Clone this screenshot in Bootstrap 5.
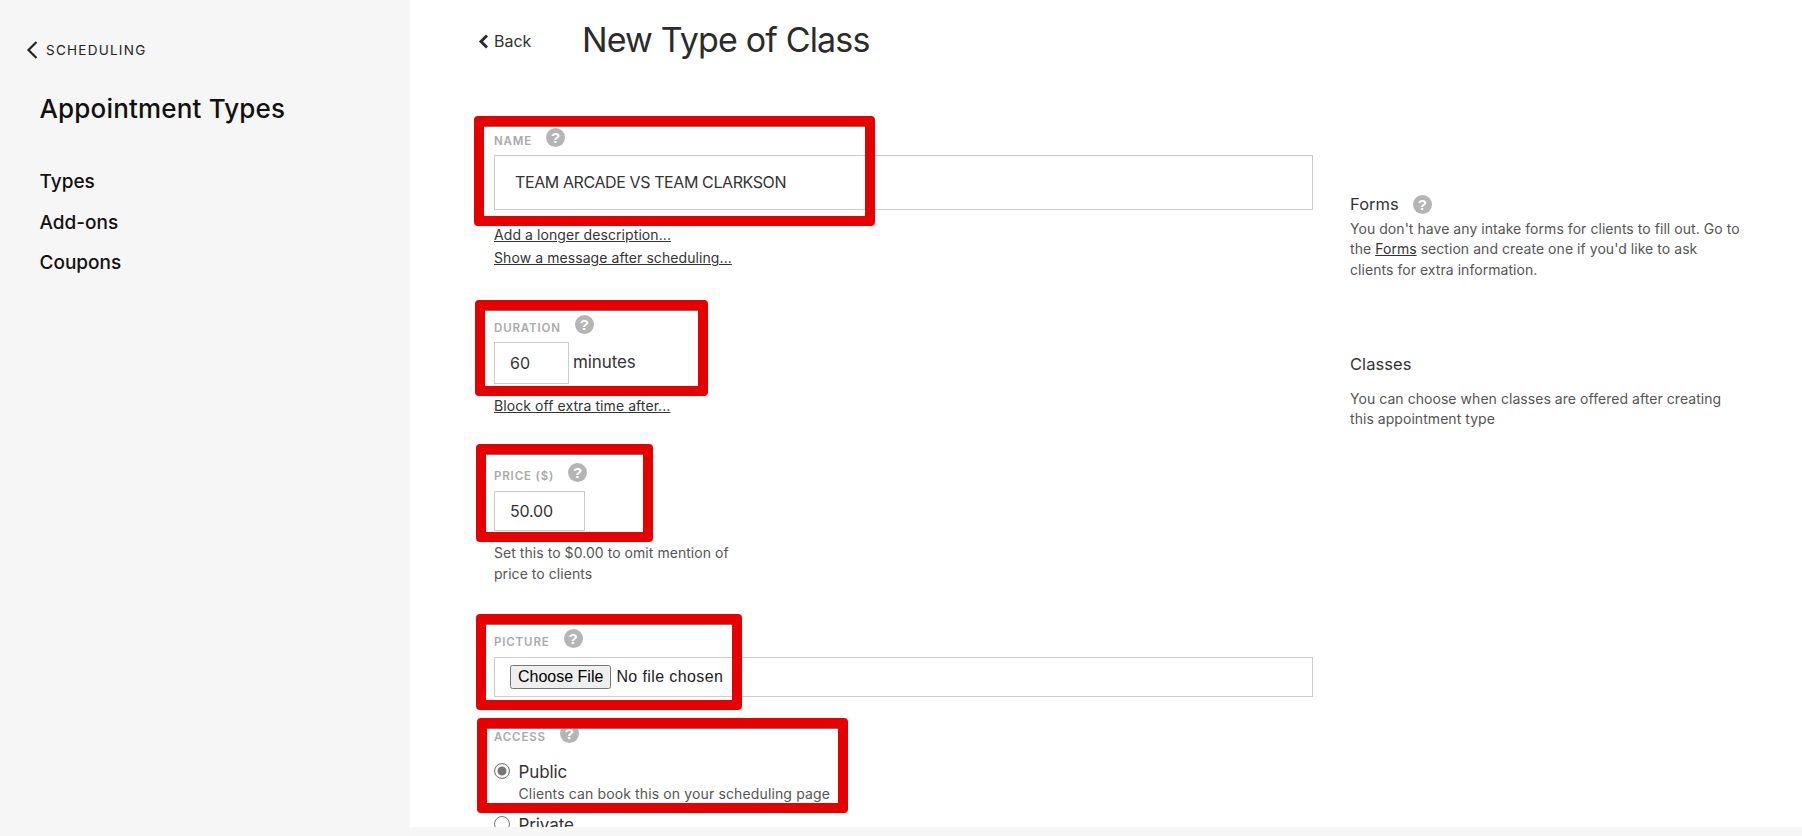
<!DOCTYPE html>
<html lang="en">
<head>
<meta charset="utf-8">
<title>New Type of Class</title>
<link href="https://cdn.jsdelivr.net/npm/bootstrap@5.3.0/dist/css/bootstrap.min.css" rel="stylesheet">
<style>
html,body{height:100%;overflow:hidden}
body{background:#f6f6f6;font-family:Inter,"Liberation Sans",sans-serif;color:#333}
.app-frame{position:relative;width:1802px;height:836px;overflow:hidden}
.app-body{height:827px}
.side-pane{width:410px;background:#f6f6f6;color:#111;flex:none;padding:41px 0 0 26px}
.side-back{display:flex;align-items:center;gap:8px;height:18px;color:#222;text-decoration:none;font-size:13.5px;letter-spacing:1.25px;line-height:18px}
.side-title{font-size:26px;font-weight:500;line-height:32px;margin:34px 0 45px 13.5px;color:#111;letter-spacing:.17px}
.side-nav{margin-left:13.5px;gap:17.5px}
.side-nav .nav-link{padding:0;color:#111;font-size:19px;font-weight:500;line-height:23px}
.main-pane{background:#fff;flex:1 1 auto;overflow:hidden;padding-left:68px;position:relative}
.top-head{height:80px;display:flex;align-items:flex-start}
.back-link{display:flex;align-items:center;gap:5px;width:104px;margin-top:31px;color:#333;text-decoration:none;font-size:16px;line-height:20px}
.page-title{font-size:34px;font-weight:400;color:#2b2b2b;margin:18px 0 0;line-height:44px;letter-spacing:-.85px}
.form-cols{display:flex}
.form-left{width:834px;padding-left:16px;flex:none}
.form-right{margin-left:38px;width:391px;color:#555;font-size:14px;line-height:20.5px;padding-top:113px;letter-spacing:.05px}
.form-right h5{font-size:16.5px;font-weight:400;color:#333;margin:0;line-height:22px;display:flex;align-items:center;gap:14px}
.form-right p{margin:3.75px 0 0}
.form-right a,.sub-link{color:#333;text-decoration:underline}
.form-right .classes-head{margin-top:72.75px}
.form-right .classes-text{margin-top:13.75px}
.field-label{display:flex;align-items:flex-end;margin:0;height:20px;line-height:18px;font-size:11.5px;font-weight:600;letter-spacing:.85px;color:#a9a9a9;text-transform:uppercase;gap:14px}
.hint-dot{display:inline-flex;align-items:center;justify-content:center;width:19px;height:19px;border-radius:50%;background:#b5b5b5;color:#fff;font:700 15px/1 "Liberation Sans",sans-serif;flex:none;letter-spacing:0;text-transform:none}
.field-label .hint-dot{align-self:flex-start;margin-top:-2.5px}
.plain-input{border:1px solid #ccc;border-radius:0;padding:0 19px;font-size:15.5px;color:#333;box-shadow:none;background:#fff}
.name-input{width:819px;height:55px;font-size:16px;letter-spacing:-.4px;margin-top:5px;padding:0 19px 2px 20px}
.group-name{padding-top:50px}
.plain-input.dur-input{width:75px;height:42px;padding:0 15px;font-size:16px}
.plain-input.price-input{width:91px;height:40px;padding:0 15px;font-size:16px;letter-spacing:-.2px}
.sub-link{display:block;font-size:14px;line-height:20px;width:max-content;letter-spacing:.08px}
.sub-links{padding-top:15px;display:flex;flex-direction:column;gap:3px}
.group-dur{padding-top:49px}
.group-dur .sub-links{padding-top:12px}
.dur-row{display:flex;align-items:center;gap:4px;font-size:17px;letter-spacing:-.1px;margin-top:5px;color:#333}
.group-price{padding-top:49px}
.price-row{margin-top:6px}
.note-text{font-size:14px;line-height:20.5px;color:#555;width:245px;margin:12px 0 0;letter-spacing:.05px}
.group-pic{padding-top:47px}
.file-box{width:819px;height:40px;border:1px solid #ccc;margin-top:6px;padding:0 15px;display:flex;align-items:center}
.file-box input{font:16px "Liberation Sans",Arial,sans-serif;color:#222;letter-spacing:.4px;width:320px}
.file-box input::file-selector-button{letter-spacing:0;margin-right:5px}
.group-access{padding-top:29px}
.choice{padding-left:24.5px;margin:16px 0 0;min-height:0;position:relative}
.choice .form-check-input{width:16px;height:16px;margin:0 0 0 -24.5px;border:1px solid #767676;position:relative;top:1px;float:left}
.choice .form-check-input:checked{background-color:#fff;background-image:none;border-color:#767676;box-shadow:inset 0 0 0 2.5px #fff,inset 0 0 0 8px #767676}
.choice label{font-size:17px;letter-spacing:-.1px;line-height:20px;color:#333;display:block}
.choice small{display:block;font-size:14px;line-height:20px;color:#555;margin-top:2px;letter-spacing:.13px}
.choice.choice-next{margin-top:11px}
.mark-box{position:absolute;border:10px solid #e60000;border-radius:4px;pointer-events:none;box-shadow:inset 0 1px 0 #777}
.mark-a{left:474px;top:116px;width:401px;height:110px}
.mark-b{left:475px;top:300px;width:233px;height:96px}
.mark-c{left:476px;top:444px;width:177px;height:98px}
.mark-d{left:476px;top:614px;width:266px;height:96px}
.mark-e{left:477px;top:718px;width:371px;height:95px}
</style>
</head>
<body>
<div class="app-frame">
  <div class="app-body d-flex">
    <aside class="side-pane">
      <a class="side-back" href="#"><svg width="12" height="18" viewBox="0 0 12 18"><path d="M10.5 1 2.5 9l8 8" fill="none" stroke="#222" stroke-width="2.2"/></svg>SCHEDULING</a>
      <div class="side-title">Appointment Types</div>
      <nav class="nav flex-column side-nav">
        <a class="nav-link" href="#">Types</a>
        <a class="nav-link" href="#">Add-ons</a>
        <a class="nav-link" href="#">Coupons</a>
      </nav>
    </aside>
    <main class="main-pane">
      <div class="top-head">
        <a class="back-link" href="#"><svg width="11" height="15" viewBox="0 0 11 15"><path d="M9 1.5 3 7.5l6 6" fill="none" stroke="#2b2b2b" stroke-width="3"/></svg>Back</a>
        <h1 class="page-title">New Type of Class</h1>
      </div>
      <div class="form-cols">
        <div class="form-left">
          <div class="group-name">
            <label class="field-label">Name <span class="hint-dot">?</span></label>
            <input class="form-control plain-input name-input" value="TEAM ARCADE VS TEAM CLARKSON">
            <div class="sub-links">
              <a class="sub-link" href="#">Add a longer description...</a>
              <a class="sub-link" href="#">Show a message after scheduling...</a>
            </div>
          </div>
          <div class="group-dur">
            <label class="field-label">Duration <span class="hint-dot">?</span></label>
            <div class="dur-row"><input class="form-control plain-input dur-input" value="60"><span>minutes</span></div>
            <div class="sub-links"><a class="sub-link" href="#">Block off extra time after...</a></div>
          </div>
          <div class="group-price">
            <label class="field-label">Price ($) <span class="hint-dot">?</span></label>
            <div class="price-row"><input class="form-control plain-input price-input" value="50.00"></div>
            <p class="note-text">Set this to $0.00 to omit mention of price to clients</p>
          </div>
          <div class="group-pic">
            <label class="field-label">Picture <span class="hint-dot">?</span></label>
            <div class="file-box"><input type="file"></div>
          </div>
          <div class="group-access">
            <label class="field-label">Access <span class="hint-dot">?</span></label>
            <div class="form-check choice">
              <input class="form-check-input" type="radio" name="access" id="pub" checked>
              <label for="pub">Public</label>
              <small>Clients can book this on your scheduling page</small>
            </div>
            <div class="form-check choice choice-next">
              <input class="form-check-input" type="radio" name="access" id="pri">
              <label for="pri">Private</label>
            </div>
          </div>
        </div>
        <div class="form-right">
          <h5>Forms <span class="hint-dot">?</span></h5>
          <p>You don't have any intake forms for clients to fill out. Go to the <a href="#">Forms</a> section and create one if you'd like to ask clients for extra information.</p>
          <h5 class="classes-head">Classes</h5>
          <p class="classes-text">You can choose when classes are offered after creating this appointment type</p>
        </div>
      </div>
    </main>
  </div>
  <div class="mark-box mark-a"></div>
  <div class="mark-box mark-b"></div>
  <div class="mark-box mark-c"></div>
  <div class="mark-box mark-d"></div>
  <div class="mark-box mark-e"></div>
</div>
<script src="https://cdn.jsdelivr.net/npm/bootstrap@5.3.0/dist/js/bootstrap.bundle.min.js"></script>
</body>
</html>
